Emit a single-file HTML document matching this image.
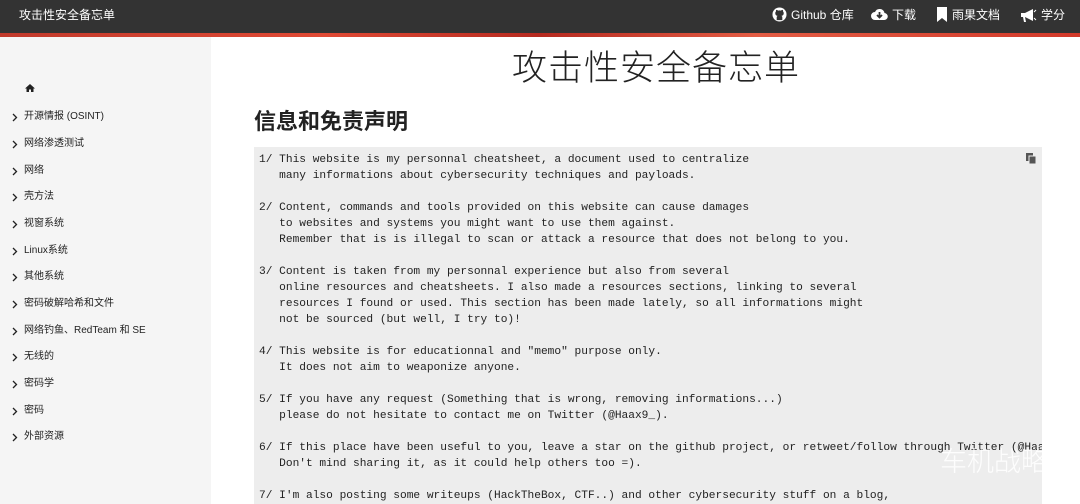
<!DOCTYPE html>
<html><head><meta charset="utf-8"><style>
*{margin:0;padding:0;box-sizing:border-box}
html,body{width:1080px;height:504px;overflow:hidden}
body{background:#fff;font-family:"Liberation Sans","Noto Sans CJK SC",sans-serif;position:relative}
.top{position:absolute;left:0;top:0;width:1080px;height:33px;background:#333;color:#fff;font-size:12px}
.stripe{position:absolute;left:0;top:33px;width:1080px;height:4px;background:linear-gradient(90deg,#c0392b,#e04a35 30%,#b52a20 50%,#e35c44 70%,#d2392a)}
.brand{position:absolute;left:19px;top:6px}
.nav{position:absolute;top:6px;display:flex;align-items:center;gap:4px}
.side{position:absolute;left:0;top:37px;width:211px;height:467px;background:#f5f5f5;font-size:10px;color:#222}
.side div{position:absolute;left:12px;height:14px;line-height:14px;margin-top:2px}
.side div svg{position:absolute;left:0;top:3px}
.side div span{position:absolute;left:12px;white-space:nowrap}
.main h1{position:absolute;left:512px;top:40px;font-size:35px;font-weight:300;color:#222;letter-spacing:1px}
.main h2{position:absolute;left:254px;top:104px;font-size:22px;font-weight:bold;color:#222}
pre{position:absolute;left:254px;top:147px;width:788px;height:357px;overflow:hidden;background:#ededed;font-family:"Liberation Mono",monospace;font-size:11.2px;line-height:16px;padding:5px 5px;color:#222}
</style></head><body>
<div class="top">
<div class="brand">攻击性安全备忘单</div>
<div class="nav" style="left:772px"><svg width="15" height="15" viewBox="0 0 16 16"><circle cx="8" cy="8" r="7.5" fill="#fff"/><path d="M5 14v-3c0-1 1-1.5 1-1.5C4 9 3.5 8 3.5 6.5 3.5 5.5 4 5 4.3 4.7 4.2 4 4.3 3.3 4.5 3c1 0 1.7.6 2 .8a6 6 0 013 0c.3-.2 1-.8 2-.8.2.3.3 1 .2 1.7.3.3.8.8.8 1.8C12.5 8 12 9 10 9.5c0 0 1 .5 1 1.5v3z" fill="#333"/></svg>Github 仓库</div>
<div class="nav" style="left:871px"><svg width="17" height="13" viewBox="0 0 17 13"><path d="M4 12a4 4 0 010-8 5 5 0 019.5 1A3.5 3.5 0 0113 12z" fill="#fff"/><path d="M8.5 4v5M6 7l2.5 2.5L11 7" stroke="#333" stroke-width="1.8" fill="none"/></svg> 下载</div>
<div class="nav" style="left:936px"><svg width="12" height="15" viewBox="0 0 12 15"><path d="M1 0h10v15L6 11 1 15z" fill="#fff"/></svg> 雨果文档</div>
<div class="nav" style="left:1020px"><svg width="17" height="14" viewBox="0 0 17 14"><path d="M1 5h4l8-4v12L5 9H1zM3 9l1 5h2L5 9" fill="#fff"/><path d="M14 4l2-2M14 10l2 2" stroke="#fff"/></svg> 学分</div>
</div>
<div class="stripe"></div>
<div class="side">
<svg style="position:absolute;left:25px;top:47px" width="10" height="8" viewBox="0 0 10 8"><path d="M5 0L0 4.5h1.5V8h2.5V5.5h2V8h2.5V4.5H10z" fill="#222"/></svg>
<div style="top:71px"><svg width="6" height="9" viewBox="0 0 6 9"><path d="M1 1l3.5 3.5L1 8" stroke="#222" stroke-width="1.3" fill="none"/></svg><span>开源情报 (OSINT)</span></div>
<div style="top:98px"><svg width="6" height="9" viewBox="0 0 6 9"><path d="M1 1l3.5 3.5L1 8" stroke="#222" stroke-width="1.3" fill="none"/></svg><span>网络渗透测试</span></div>
<div style="top:125px"><svg width="6" height="9" viewBox="0 0 6 9"><path d="M1 1l3.5 3.5L1 8" stroke="#222" stroke-width="1.3" fill="none"/></svg><span>网络</span></div>
<div style="top:151px"><svg width="6" height="9" viewBox="0 0 6 9"><path d="M1 1l3.5 3.5L1 8" stroke="#222" stroke-width="1.3" fill="none"/></svg><span>壳方法</span></div>
<div style="top:178px"><svg width="6" height="9" viewBox="0 0 6 9"><path d="M1 1l3.5 3.5L1 8" stroke="#222" stroke-width="1.3" fill="none"/></svg><span>视窗系统</span></div>
<div style="top:205px"><svg width="6" height="9" viewBox="0 0 6 9"><path d="M1 1l3.5 3.5L1 8" stroke="#222" stroke-width="1.3" fill="none"/></svg><span>Linux系统</span></div>
<div style="top:231px"><svg width="6" height="9" viewBox="0 0 6 9"><path d="M1 1l3.5 3.5L1 8" stroke="#222" stroke-width="1.3" fill="none"/></svg><span>其他系统</span></div>
<div style="top:258px"><svg width="6" height="9" viewBox="0 0 6 9"><path d="M1 1l3.5 3.5L1 8" stroke="#222" stroke-width="1.3" fill="none"/></svg><span>密码破解哈希和文件</span></div>
<div style="top:285px"><svg width="6" height="9" viewBox="0 0 6 9"><path d="M1 1l3.5 3.5L1 8" stroke="#222" stroke-width="1.3" fill="none"/></svg><span>网络钓鱼、RedTeam 和 SE</span></div>
<div style="top:311px"><svg width="6" height="9" viewBox="0 0 6 9"><path d="M1 1l3.5 3.5L1 8" stroke="#222" stroke-width="1.3" fill="none"/></svg><span>无线的</span></div>
<div style="top:338px"><svg width="6" height="9" viewBox="0 0 6 9"><path d="M1 1l3.5 3.5L1 8" stroke="#222" stroke-width="1.3" fill="none"/></svg><span>密码学</span></div>
<div style="top:365px"><svg width="6" height="9" viewBox="0 0 6 9"><path d="M1 1l3.5 3.5L1 8" stroke="#222" stroke-width="1.3" fill="none"/></svg><span>密码</span></div>
<div style="top:391px"><svg width="6" height="9" viewBox="0 0 6 9"><path d="M1 1l3.5 3.5L1 8" stroke="#222" stroke-width="1.3" fill="none"/></svg><span>外部资源</span></div>
</div>
<div class="main"><h1>攻击性安全备忘单</h1><h2>信息和免责声明</h2></div>
<pre>1/ This website is my personnal cheatsheet, a document used to centralize
   many informations about cybersecurity techniques and payloads.

2/ Content, commands and tools provided on this website can cause damages
   to websites and systems you might want to use them against.
   Remember that is is illegal to scan or attack a resource that does not belong to you.

3/ Content is taken from my personnal experience but also from several
   online resources and cheatsheets. I also made a resources sections, linking to several
   resources I found or used. This section has been made lately, so all informations might
   not be sourced (but well, I try to)!

4/ This website is for educationnal and "memo" purpose only.
   It does not aim to weaponize anyone.

5/ If you have any request (Something that is wrong, removing informations...)
   please do not hesitate to contact me on Twitter (@Haax9_).

6/ If this place have been useful to you, leave a star on the github project, or retweet/follow through Twitter (@Haa
   Don't mind sharing it, as it could help others too =).

7/ I'm also posting some writeups (HackTheBox, CTF..) and other cybersecurity stuff on a blog,</pre>
<svg style="position:absolute;left:1026px;top:153px" width="11" height="12" viewBox="0 0 11 12"><rect x="0" y="0" width="7" height="8" fill="#555"/><rect x="3" y="3" width="7" height="8" fill="#555" stroke="#ededed"/></svg>
<div style="position:absolute;left:940px;top:440px;font-size:27px;color:rgba(255,255,255,.85);font-family:'Noto Sans CJK SC',sans-serif;font-weight:300">车机战略</div>
</body></html>
